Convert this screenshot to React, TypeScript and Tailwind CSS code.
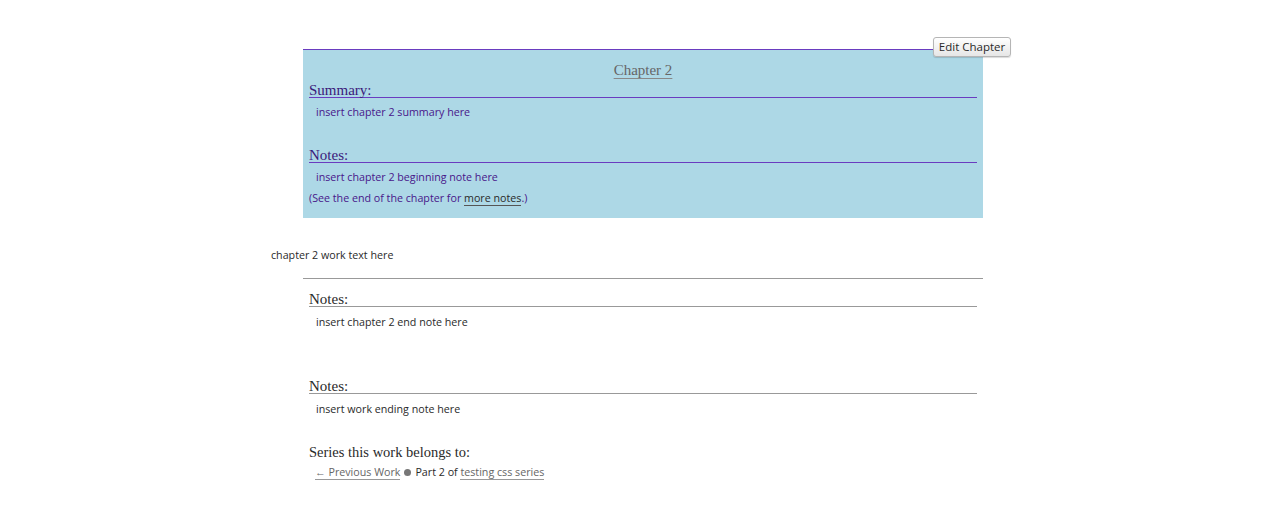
import React from 'react';

const serif = "font-['Liberation_Serif',Georgia,serif]";
const sans = "font-['Open_Sans','Lucida_Grande',sans-serif]";

function Heading({ children, purple }: { children: React.ReactNode; purple?: boolean }) {
  return (
    <h3
      className={`${serif} text-[15px] leading-[14px] pt-[2px] border-b ${
        purple ? 'text-[#3b1a7a] border-[#6a3cc0]' : 'text-[#2a2a2a] border-[#999]'
      }`}
    >
      {children}
    </h3>
  );
}

export default function App() {
  return (
    <div className={`${sans} min-h-[528px] bg-white text-[10.7px] leading-[18px] text-[#2a2a2a]`}>
      <div className="relative ml-[271px] w-[740px] pt-[49px] pb-[40px]">
        {/* chapter actions */}
        <button className="absolute right-0 top-[37px] h-[20px] w-[78px] rounded-[3px] border border-[#b5b5b5] bg-gradient-to-b from-white to-[#e6e6e6] text-[11.5px] leading-[18px] text-[#2a2a2a] shadow-[0_1px_1px_rgba(0,0,0,0.15)]">
          Edit Chapter
        </button>

        {/* preface */}
        <div className="ml-[32px] w-[680px] border-t border-[#6a3cc0] bg-[#add8e6] px-[6px] pt-[10px] pb-[11px]">
          <h2 className={`${serif} mb-[1px] text-center text-[15px] leading-[20px]`}>
            <a className="text-[#666] underline decoration-[#888] underline-offset-[3px]">Chapter 2</a>
          </h2>

          <Heading purple>Summary:</Heading>
          <p className="mt-[5px] pl-[7px] text-[#48168a]">insert chapter 2 summary here</p>

          <div className="mt-[25px]">
            <Heading purple>Notes:</Heading>
          </div>
          <p className="mt-[5px] pl-[7px] text-[#48168a]">insert chapter 2 beginning note here</p>
          <p className="mt-[3px] text-[#48168a]">
            (See the end of the chapter for{' '}
            <a className="border-b border-[#555] text-[#2a2a2a]">more notes</a>.)
          </p>
        </div>

        {/* work text */}
        <p className="mt-[28px]">chapter 2 work text here</p>

        {/* end notes */}
        <div className="ml-[32px] mt-[14px] w-[680px] border-t border-[#999] px-[6px] pt-[11px]">
          <Heading>Notes:</Heading>
          <p className="mt-[6px] pl-[7px]">insert chapter 2 end note here</p>

          <div className="mt-[46px]">
            <Heading>Notes:</Heading>
          </div>
          <p className="mt-[6px] pl-[7px]">insert work ending note here</p>

          <h3 className={`${serif} mt-[24px] text-[14.5px] leading-[20px]`}>Series this work belongs to:</h3>
          <p className="mt-[1px] pl-[6px]">
            <a className="border-b border-[#999] text-[#666]">← Previous Work</a>
            <span className="mx-[4px] inline-block h-[7px] w-[7px] rounded-full bg-[#777] align-[0px]" />
            Part 2 of <a className="border-b border-[#999] text-[#666]">testing css series</a>
          </p>
        </div>
      </div>
    </div>
  );
}
